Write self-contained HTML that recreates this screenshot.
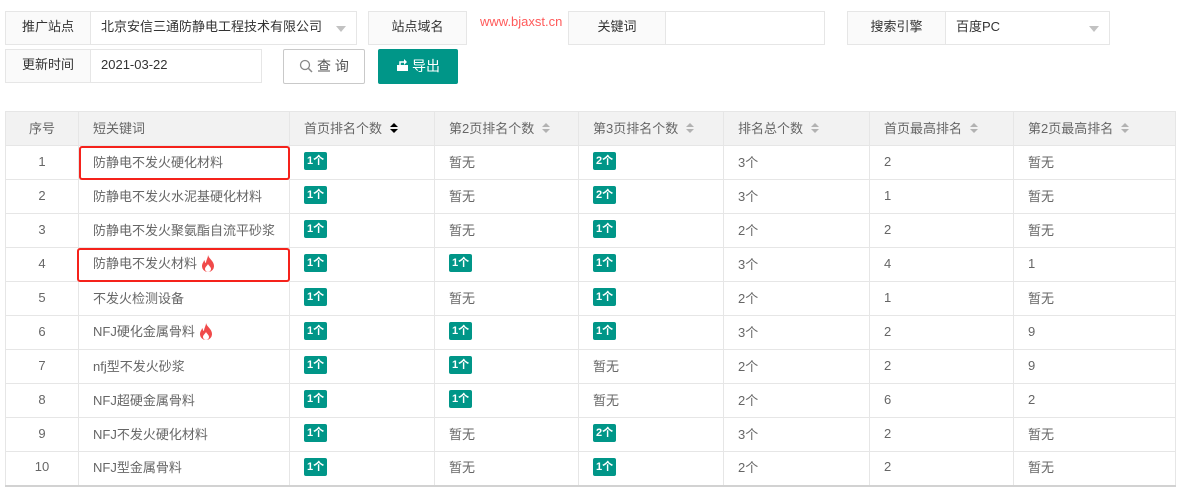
<!DOCTYPE html>
<html><head><meta charset="utf-8"><style>
*{box-sizing:border-box;margin:0;padding:0}
body{width:1177px;height:487px;background:#fff;font-family:"Liberation Sans","Noto Sans CJK SC",sans-serif;font-size:13px;color:#333;position:relative;overflow:hidden}
.b{position:absolute;border:1px solid #e6e6e6;background:#fff;height:34px;line-height:30px}
.lab{background:#fafafa;text-align:center;color:#333}
.val{padding-left:10px;color:#333}
.caret{position:absolute;right:10px;top:14px;width:0;height:0;border:5px solid transparent;border-top:6px solid #c2c2c2}
table{position:absolute;left:5px;top:111px;border-collapse:collapse;width:1171px;color:#666;table-layout:fixed}
td,th{border:1px solid #e6e6e6;height:34px;font-weight:normal;text-align:left;padding-left:14px;padding-bottom:3px;white-space:nowrap}
th{background:#f2f2f2;color:#666}
td:first-child,th:first-child{text-align:center;padding-left:0}
tr:last-child td{border-bottom:2px solid #d2d2d2}
.g{display:inline-block;background:#009688;color:#fff;font-size:11px;font-weight:bold;height:18px;line-height:18px;padding:0 3px;border-radius:2px;vertical-align:middle}
.s{display:inline-block;width:8px;margin-left:8px;vertical-align:middle;position:relative;height:12px}
.s:before{content:"";position:absolute;left:0;top:0;border:4px solid transparent;border-bottom:4px solid #b2b2b2;border-top:0}
.s:after{content:"";position:absolute;left:0;top:6px;border:4px solid transparent;border-top:4px solid #b2b2b2;border-bottom:0}
.s.d:after{border-top-color:#000}.s.d:before{border-bottom-color:#000}
.red{position:absolute;border:2px solid #f5221b;border-radius:3px}
.fire{display:inline-block;vertical-align:middle;margin-left:3px}
</style></head><body>
<div class="b lab" style="left:5px;top:11px;width:86px">推广站点</div>
<div class="b val" style="left:90px;top:11px;width:267px">北京安信三通防静电工程技术有限公司<span class="caret"></span></div>
<div class="b lab" style="left:368px;top:11px;width:99px">站点域名</div>
<div style="position:absolute;left:480px;top:9px;line-height:26px;color:#ff5a5a;font-size:13px">www.bjaxst.cn</div>
<div class="b lab" style="left:568px;top:11px;width:98px">关键词</div>
<div class="b" style="left:665px;top:11px;width:160px"></div>
<div class="b lab" style="left:847px;top:11px;width:99px">搜索引擎</div>
<div class="b val" style="left:945px;top:11px;width:165px">百度PC<span class="caret"></span></div>
<div class="b lab" style="left:5px;top:49px;width:86px">更新时间</div>
<div class="b val" style="left:90px;top:49px;width:172px;line-height:30px">2021-03-22</div>
<div style="position:absolute;left:283px;top:49px;width:82px;height:35px;border:1px solid #c9c9c9;border-radius:2px;text-align:center;line-height:33px;font-size:14px;color:#555"><svg width="14" height="14" style="vertical-align:-2px"><circle cx="6" cy="6" r="4.5" fill="none" stroke="#888" stroke-width="1.3"/><path d="M9.5 9.5L13 13" stroke="#888" stroke-width="1.5"/></svg> 查 询</div>
<div style="position:absolute;left:378px;top:49px;width:80px;height:35px;background:#009688;border-radius:2px;color:#fff;text-align:center;line-height:35px;font-size:14px"><svg width="13" height="13" style="vertical-align:-1px;margin-right:3px"><rect x="1" y="6" width="11" height="6" fill="#fff"/><path d="M4 6V3h5" stroke="#fff" stroke-width="1.5" fill="none"/><path d="M8 0l3 3-3 3z" fill="#fff"/></svg>导出</div>
<table>
<colgroup><col style="width:73px"><col style="width:211px"><col style="width:145px"><col style="width:144px"><col style="width:145px"><col style="width:146px"><col style="width:144px"><col></colgroup>
<tr><th>序号</th><th>短关键词</th><th>首页排名个数<span class="s d"></span></th><th>第2页排名个数<span class="s"></span></th><th>第3页排名个数<span class="s"></span></th><th>排名总个数<span class="s"></span></th><th>首页最高排名<span class="s"></span></th><th>第2页最高排名<span class="s"></span></th></tr>
<tr><td>1</td><td>防静电不发火硬化材料</td><td><span class="g">1个</span></td><td>暂无</td><td><span class="g">2个</span></td><td>3个</td><td>2</td><td>暂无</td></tr>
<tr><td>2</td><td>防静电不发火水泥基硬化材料</td><td><span class="g">1个</span></td><td>暂无</td><td><span class="g">2个</span></td><td>3个</td><td>1</td><td>暂无</td></tr>
<tr><td>3</td><td>防静电不发火聚氨酯自流平砂浆</td><td><span class="g">1个</span></td><td>暂无</td><td><span class="g">1个</span></td><td>2个</td><td>2</td><td>暂无</td></tr>
<tr><td>4</td><td>防静电不发火材料<svg class="fire" width="16" height="18" viewBox="0 0 16 18"><path d="M8 0C9 4 14 6 14 11a6 6 0 0 1-12 0c0-3 2-4 2-6 1 1 1 3 2 3 0-3 2-5 2-8z" fill="#f04a4a"/><path d="M8 9c1 2 3 3 3 5a3 3 0 0 1-6 0c0-2 2-3 3-5z" fill="#fff"/></svg></td><td><span class="g">1个</span></td><td><span class="g">1个</span></td><td><span class="g">1个</span></td><td>3个</td><td>4</td><td>1</td></tr>
<tr><td>5</td><td>不发火检测设备</td><td><span class="g">1个</span></td><td>暂无</td><td><span class="g">1个</span></td><td>2个</td><td>1</td><td>暂无</td></tr>
<tr><td>6</td><td>NFJ硬化金属骨料<svg class="fire" width="16" height="18" viewBox="0 0 16 18"><path d="M8 0C9 4 14 6 14 11a6 6 0 0 1-12 0c0-3 2-4 2-6 1 1 1 3 2 3 0-3 2-5 2-8z" fill="#f04a4a"/><path d="M8 9c1 2 3 3 3 5a3 3 0 0 1-6 0c0-2 2-3 3-5z" fill="#fff"/></svg></td><td><span class="g">1个</span></td><td><span class="g">1个</span></td><td><span class="g">1个</span></td><td>3个</td><td>2</td><td>9</td></tr>
<tr><td>7</td><td>nfj型不发火砂浆</td><td><span class="g">1个</span></td><td><span class="g">1个</span></td><td>暂无</td><td>2个</td><td>2</td><td>9</td></tr>
<tr><td>8</td><td>NFJ超硬金属骨料</td><td><span class="g">1个</span></td><td><span class="g">1个</span></td><td>暂无</td><td>2个</td><td>6</td><td>2</td></tr>
<tr><td>9</td><td>NFJ不发火硬化材料</td><td><span class="g">1个</span></td><td>暂无</td><td><span class="g">2个</span></td><td>3个</td><td>2</td><td>暂无</td></tr>
<tr><td>10</td><td>NFJ型金属骨料</td><td><span class="g">1个</span></td><td>暂无</td><td><span class="g">1个</span></td><td>2个</td><td>2</td><td>暂无</td></tr>
</table>
<div class="red" style="left:79px;top:146px;width:211px;height:34px"></div>
<div class="red" style="left:77px;top:248px;width:213px;height:34px"></div>
</body></html>
